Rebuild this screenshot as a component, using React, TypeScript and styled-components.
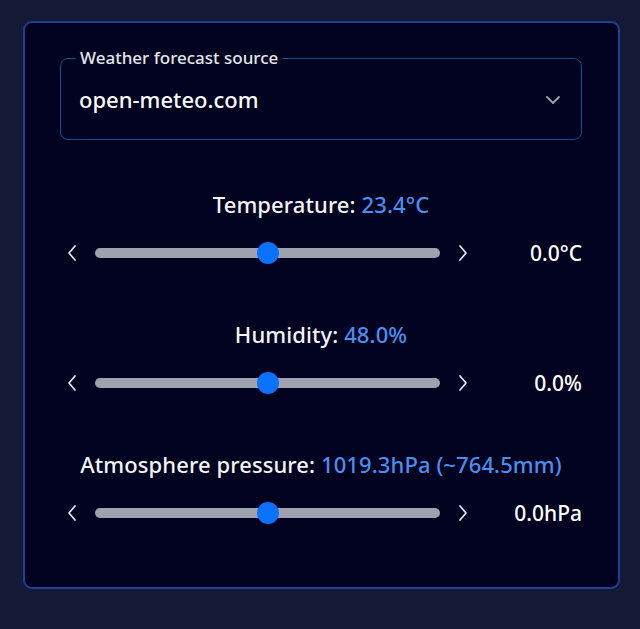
import React from "react";
import styled, { createGlobalStyle } from "styled-components";

const Global = createGlobalStyle`
    html, body {
        margin: 0;
        padding: 0;
        background: #141a35;
        font-family: "Noto Sans", "DejaVu Sans", sans-serif;
        color: #f3f4f6;
    }
`

const Page = styled.div`
    width: 640px;
    height: 629px;
    padding: 21px 20px 0 23px;
    box-sizing: border-box;
`
const Card = styled.div`
    width: 597px;
    height: 568px;
    box-sizing: border-box;
    background: #00021f;
    border: 2px solid #1f3f94;
    border-radius: 9px;
    padding: 26px 36px 0 35px;
`
const Field = styled.fieldset`
    margin: 0;
    height: 91px;
    box-sizing: border-box;
    border: 1px solid #0c5194;
    border-radius: 8px;
    padding: 0 20px 0 18px;
    display: flex;
    align-items: center;
    justify-content: space-between;
    & legend{
        margin-left: -3px;
        padding: 0 4px;
        font-size: 17px;
        line-height: 18px;
        font-weight: 500;
        color: #e5e7eb;
    }
`
const SelectValue = styled.span`
    font-size: 22px;
    font-weight: 500;
    color: #f9fafb;
    margin-top: -9px;
`
const Caret = styled.svg`
    margin-top: -7px;
`
const Section = styled.div<{$top:string}>`
    margin-top: ${props=>props.$top};
    display: flex;
    flex-direction: column;
    align-items: center;
`
const Label = styled.div`
    font-size: 22px;
    font-weight: 500;
    letter-spacing: 0.1px;
    line-height: 26px;
    color: #f3f4f6;
    & span{
        color: #4a8ff0;
    }
`
const SliderRow = styled.div`
    margin-top: 22px;
    align-self: stretch;
    display: grid;
    grid-template-columns: 24px 1fr 24px 96px;
    column-gap: 11px;
    align-items: center;
    height: 26px;
`
const Arrow = styled.button`
    background: none;
    border: none;
    padding: 0;
    display: flex;
    justify-content: center;
    color: #e5e7eb;
`
const Track = styled.div`
    position: relative;
    height: 10px;
    border-radius: 5px;
    background: #9ca3af;
`
const Thumb = styled.div`
    position: absolute;
    top: 50%;
    width: 22px;
    height: 22px;
    margin: -11px 0 0 -11px;
    border-radius: 50%;
    background: #0a72ff;
`
const Value = styled.div`
    text-align: right;
    font-size: 21px;
    font-weight: 500;
    color: #ffffff;
`

const Chevron = ({dir}:{dir:"left"|"right"})=>(
    <svg width="14" height="20" viewBox="0 0 14 20" fill="none" stroke="currentColor" strokeWidth="1.7" strokeLinecap="round" strokeLinejoin="round">
        {dir==="left" ? <path d="M10 3 L4 10 L10 17"/> : <path d="M4 3 L10 10 L4 17"/>}
    </svg>
)

const Slider = ({label,reading,unit,offset,pos}:{label:string,reading:string,unit:string,offset:string,pos:number})=>(
    <Section $top={offset}>
        <Label>{label}: <span>{reading}</span></Label>
        <SliderRow>
            <Arrow><Chevron dir="left"/></Arrow>
            <Track><Thumb style={{left:`${pos}%`}}/></Track>
            <Arrow><Chevron dir="right"/></Arrow>
            <Value>{unit}</Value>
        </SliderRow>
    </Section>
)

const App = ()=>{
    return(
        <Page>
            <Global/>
            <Card>
                <Field>
                    <legend>Weather forecast source</legend>
                    <SelectValue>open-meteo.com</SelectValue>
                    <Caret width="16" height="10" viewBox="0 0 16 10" fill="none" stroke="#9ca3af" strokeWidth="1.8" strokeLinecap="round" strokeLinejoin="round">
                        <path d="M2 2 L8 8 L14 2"/>
                    </Caret>
                </Field>
                <Slider label="Temperature" reading="23.4°C" unit="0.0°C" offset="51px" pos={50}/>
                <Slider label="Humidity" reading="48.0%" unit="0.0%" offset="56px" pos={50}/>
                <Slider label="Atmosphere pressure" reading="1019.3hPa (~764.5mm)" unit="0.0hPa" offset="56px" pos={50}/>
            </Card>
        </Page>
    )
}

export default App
